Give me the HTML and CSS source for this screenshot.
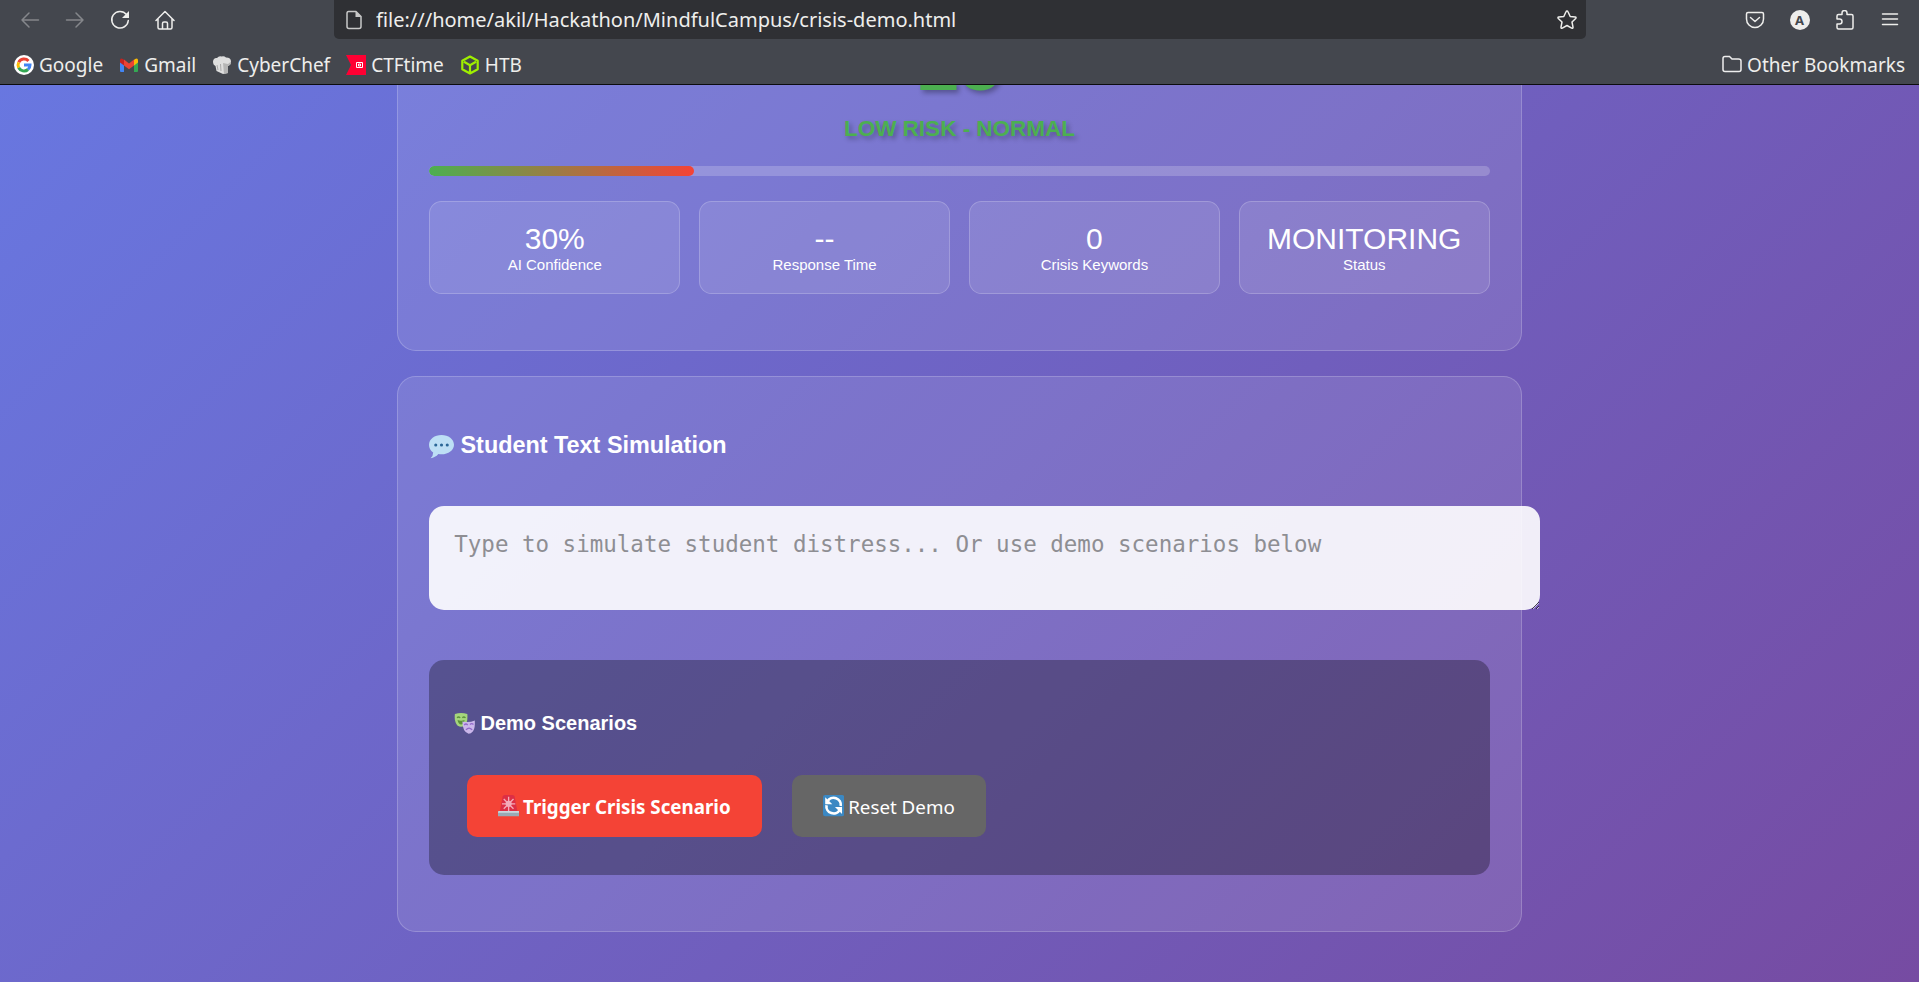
FILE: index.html
```html
<!DOCTYPE html>
<html lang="en">
<head>
<meta charset="utf-8">
<title>MindfulCampus</title>
<link rel="stylesheet" href="styles.css">
</head>
<body>
<header class="chrome">
  <div class="toolbar">
    <nav class="tools" aria-label="Navigation">
      <button class="tool dim" aria-label="Back"><svg class="icon" viewBox="0 0 20 20"><path d="M18.500 10H2M9 3l-7 7 7 7"/></svg></button>
      <button class="tool dim" aria-label="Forward"><svg class="icon" viewBox="0 0 20 20"><path d="M1.500 10H18M11 3l7 7-7 7"/></svg></button>
      <button class="tool" aria-label="Reload"><svg class="icon" viewBox="0 0 20 20"><path d="M16.500 4.500A8.300 8.300 0 1 0 18.300 10.500"/><path class="solid" d="M19 1v7h-7z"/></svg></button>
      <button class="tool" aria-label="Home"><svg class="icon" viewBox="0 0 20 20"><path d="M1 10.500 10 1.500l9 9M3 9v8.500q0 1.500 1.500 1.500h11q1.500 0 1.500-1.500V9M7.500 19v-5.500q0-1.500 1.500-1.500h2q1.500 0 1.500 1.500V19"/></svg></button>
    </nav>
    <div class="address">
      <svg class="icon pale" viewBox="0 0 20 20"><path d="M4.500 1.500h7.500l5 5v10q0 2-2 2H5q-2 0-2-2v-13q0-2 1.500-2z"/><path class="solid" d="M11.500 1v6h6z"/></svg>
      <input class="url" type="text" aria-label="Address" value="file:///home/akil/Hackathon/MindfulCampus/crisis-demo.html">
      <button class="star" aria-label="Bookmark this page"><svg class="icon" viewBox="0 0 20 20"><path d="M10 1q.7 0 1 .7l2.200 4.800 5 .6q1.400.3.500 1.400l-3.700 3.500 1 5.200q.1 1.500-1.300.9L10 15.500l-4.700 2.600q-1.400.6-1.300-.9l1-5.200-3.700-3.500q-.9-1.100.5-1.400l5-.6L9 1.700q.3-.7 1-.7z"/></svg></button>
    </div>
    <nav class="tools" aria-label="Extensions">
      <button class="tool" aria-label="Pocket"><svg class="icon" viewBox="0 0 20 20"><path d="M3 2.500h14q1.500 0 1.500 1.500v5a8.500 8.500 0 0 1-17 0V4q0-1.500 1.500-1.500zM5.500 7.500 10 11.500l4.500-4"/></svg></button>
      <button class="tool" aria-label="Account"><span class="avatar">A</span></button>
      <button class="tool" aria-label="Add-ons"><svg class="icon" viewBox="0 0 20 20"><path d="M2 9V6q0-1.500 1.500-1.500H7V3a2.500 2.500 0 0 1 5 0v1.500h4.500Q18 4.500 18 6v11.500q0 1.500-1.500 1.500h-13Q2 19 2 17.500V14h2.500a2.500 2.500 0 0 0 0-5z"/></svg></button>
      <button class="tool" aria-label="Menu"><svg class="icon" viewBox="0 0 20 20"><path d="M2.500 4h15M2.500 9h15M2.500 14.500h15"/></svg></button>
    </nav>
  </div>
  <nav class="bookmarks" aria-label="Bookmarks">
    <a class="bookmark" href="#"><svg class="favicon" viewBox="0 0 20 20"><circle cx="10" cy="10" r="10" fill="#fff"/><g fill="none" stroke-width="3"><path d="M4.700 7.300A6 6 0 0 1 14.500 6" stroke="#ea4335"/><path d="M4.700 7.300a6 6 0 0 0 0 5.400" stroke="#fbbc05"/><path d="M4.700 12.700A6 6 0 0 0 14 14.500" stroke="#34a853"/><path d="M14 14.500A6 6 0 0 0 16 10h-6" stroke="#4285f4"/></g></svg>Google</a>
    <a class="bookmark" href="#"><svg class="favicon" viewBox="0 0 20 20"><path d="M1 5v11q0 1 1 1h3V8z" fill="#4285f4"/><path d="M19 5v11q0 1-1 1h-3V8z" fill="#34a853"/><path d="M15 5l1-1q3-1.500 3 1.500v2L15 10.500z" fill="#fbbc04"/><path d="M5 5 4 4Q1 2.500 1 5.500v2l4 3z" fill="#c5221f"/><path d="M5 4.500l5 4 5-4v6L10 14.200l-5-3.700z" fill="#ea4335"/></svg>Gmail</a>
    <a class="bookmark" href="#"><svg class="favicon" viewBox="0 0 20 20"><path d="M4.500 16 3.500 11Q1 10 1 6.500 1.500 2.500 5 3q2-2.500 4.500-1.500Q12 .5 14 2.500q5 0 5 4 0 3.500-3 4.500v7l-5 1z" fill="#dedede"/><path d="M11 8l1 11 4-1v-7q3-1 3-4.500L16 9z" fill="#b5b5b5"/><path d="M5 10l1 5M8.500 9l.5 7" stroke="#aaa"/></svg>CyberChef</a>
    <a class="bookmark" href="#"><svg class="favicon" viewBox="0 0 20 20"><path d="M0 0h20v20H0l5-10z" fill="#ff0033"/><path d="M10.500 7.500h6v5h-6zM12.500 9h2v2h-2z" fill="none" stroke="#fff"/></svg>CTFtime</a>
    <a class="bookmark" href="#"><svg class="favicon" viewBox="0 0 20 20"><path d="M10 1.500l7.700 4.300v8.400L10 18.500l-7.700-4.300V5.800zM4 6.800l6 3.400 6-3.400M10 10v8" fill="none" stroke="#9fef00" stroke-width="2.200" stroke-linejoin="round"/></svg>HTB</a>
    <a class="bookmark other" href="#"><svg class="favicon" viewBox="0 0 20 20"><path d="M3 1.500h4.500L10 4h6.500Q19 4 19 6v8.500q0 2-2 2H3q-2 0-2-2v-11q0-2 2-2z" fill="none" stroke="#eee" stroke-width="1.500"/></svg>Other Bookmarks</a>
  </nav>
</header>
<div class="viewport">
  <main class="container">
    <section class="card">
      <div class="score">25</div>
      <div class="level">LOW RISK - NORMAL</div>
      <div class="track"><div class="fill" style="width:25%"></div></div>
      <div class="stats">
        <div class="stat"><div class="value">30%</div><div class="label">AI Confidence</div></div>
        <div class="stat"><div class="value">--</div><div class="label">Response Time</div></div>
        <div class="stat"><div class="value">0</div><div class="label">Crisis Keywords</div></div>
        <div class="stat"><div class="value">MONITORING</div><div class="label">Status</div></div>
      </div>
    </section>
    <section class="card">
      <h3 class="title"><label class="caption" for="message"><svg class="emoji" viewBox="0 0 24 24"><path d="M12 1c6.600 0 12 4 12 9.300s-5.400 9.200-12 9.200q-1.500 0-3-.3-3 3.500-7.500 4 2.500-2 2.500-5.500Q0 15 0 10.300C0 5 5.400 1 12 1z" fill="#bddff5"/><g fill="#2a6797"><circle cx="6.500" cy="10.500" r="1.500"/><circle cx="12" cy="10.500" r="1.500"/><circle cx="17.500" cy="10.500" r="1.500"/></g></svg>Student Text Simulation</label></h3>
      <textarea id="message" class="message" placeholder="Type to simulate student distress... Or use demo scenarios below"></textarea>
      <div class="scenarios">
        <h4 class="subtitle"><svg class="emoji" viewBox="0 0 24 24"><path d="M1 1q7-2 14 0 1 9-3 13-4 3-8 0Q0 10 1 1z" fill="#a5d67c"/><path d="M3.500 5.500Q5 3.500 7 5.500M9.500 5.500q1.500-2 3.500 0" fill="none" stroke="#5c913b" stroke-width="1.500"/><path d="M4 8q4 1.500 8 0-1 5-4 5t-4-5z" fill="#5c913b"/><path d="M9.500 9.500q7 2 14-1 .5 9-2 12-2.500 3-5 3-7-2.500-7-14z" fill="#cbb7ea"/><path d="M11.500 13.500q2-2 4 0M18 13q2-2 4 0M13.500 19q3.500-4 7 0" fill="none" stroke="#9268ca" stroke-width="1.500"/></svg>Demo Scenarios</h4>
        <div class="actions">
          <button class="action danger"><svg class="emoji" viewBox="0 0 24 24"><path d="M5 3q0-3 3-3h8q3 0 3 3l3 16H2z" fill="#dd2e44"/><path d="M12 2v16M4.500 10h15M6.500 4.500l11 11M17.500 4.500l-11 11" stroke="#f4abba" stroke-width="1.500"/><circle cx="12" cy="10" r="3.500" fill="#f4abba"/><path d="M1 18h22q1 0 1 1v5H0v-5q0-1 1-1z" fill="#99aab5"/><path d="M1 18h22q1 0 1 2H0q0-2 1-2z" fill="#ccd6dd"/></svg>Trigger Crisis Scenario</button>
          <button class="action plain"><svg class="emoji" viewBox="0 0 24 24"><rect width="24" height="24" rx="2.500" fill="#3b88c3"/><path d="M5 7.500A8 8 0 0 1 20 12.500M19 16.500A8 8 0 0 1 4 11.500" fill="none" stroke="#fff" stroke-width="3"/><path d="M2.500 2.500v8h8zM21.500 21.500v-8h-8z" fill="#fff"/></svg>Reset Demo</button>
        </div>
      </div>
    </section>
  </main>
</div>
</body>
</html>
```
FILE: styles.css
```css
body {
  margin: 0;
  height: 100vh;
  display: flex;
  flex-direction: column;
  overflow: hidden;
  font-family: "Liberation Sans", Arial, sans-serif;
  color: #fff;
}

button,
input {
  font: inherit;
  color: inherit;
  border: 0;
  background: none;
  padding: 0;
}

/* Browser bars */
.chrome {
  flex: none;
  background: #44474e;
  color: #eeeeec;
  border-bottom: 1px solid #0c0c0d;
  font: 20px/26px "Noto Sans", sans-serif;
}

.toolbar {
  display: flex;
  height: 39px;
  padding: 0 7px;
}

.tools {
  display: flex;
}

.tool {
  width: 45px;
  display: grid;
  place-items: center;
}

.dim {
  color: #85878b;
}

.icon {
  width: 20px;
  height: 20px;
  flex: none;
  fill: none;
  stroke: currentColor;
  stroke-width: 1.5;
  stroke-linecap: round;
  stroke-linejoin: round;
}

.icon .solid {
  fill: currentColor;
  stroke: none;
}

.pale {
  color: #c8c8c8;
}

.address {
  flex: 1;
  display: flex;
  align-items: center;
  gap: 12px;
  margin: 0 146px 0 147px;
  padding: 0 9px 0 10px;
  background: #2f3034;
  border-radius: 0 0 5px 5px;
}

.url {
  flex: 1;
  min-width: 0;
}

.star {
  display: flex;
}

.avatar {
  width: 20px;
  height: 20px;
  border-radius: 50%;
  background: #eeeeec;
  color: #44474e;
  font: bold 13px/20px "Noto Sans", sans-serif;
}

.bookmarks {
  display: flex;
  align-items: center;
  gap: 16px;
  height: 39px;
  padding: 6px 14px 0;
  font-size: 19px;
  white-space: nowrap;
}

.bookmark {
  display: flex;
  align-items: center;
  gap: 5px;
  color: inherit;
  text-decoration: none;
}

.other {
  margin-left: auto;
}

.favicon {
  width: 20px;
  height: 20px;
  flex: none;
}

/* Page, shown scrolled to its end */
.viewport {
  flex: 1;
  min-height: 0;
  overflow: hidden;
  display: flex;
  flex-direction: column;
  justify-content: flex-end;
  background: linear-gradient(135deg, #667eea 0%, #764ba2 100%) bottom / 100% 150%;
}

.container {
  zoom: 1.25;
  width: 100%;
  max-width: 900px;
  margin: 0 auto;
  padding: 20px;
}

.card {
  margin-bottom: 20px;
  padding: 25px;
  background: rgba(255, 255, 255, 0.1);
  border: 1px solid rgba(255, 255, 255, 0.2);
  border-radius: 15px;
}

.score {
  margin-bottom: 7px;
  font-size: 60px;
  font-weight: bold;
  text-align: center;
  color: #4caf50;
  text-shadow: 2px 2px 4px rgba(0, 0, 0, 0.3);
}

.level {
  font-size: 18px;
  line-height: 20px;
  font-weight: bold;
  text-align: center;
  color: #4caf50;
  text-shadow: 2px 2px 4px rgba(0, 0, 0, 0.3);
}

.track {
  height: 8px;
  margin: 20px 0;
  overflow: hidden;
  background: rgba(255, 255, 255, 0.2);
  border-radius: 4px;
}

.fill {
  height: 100%;
  background: linear-gradient(90deg, #4caf50, #f44336);
  border-radius: 4px;
}

.stats {
  display: grid;
  grid-template-columns: repeat(4, 1fr);
  gap: 15px;
  margin: 20px 0;
}

.stat {
  padding: 15px;
  text-align: center;
  background: rgba(255, 255, 255, 0.1);
  border: 1px solid rgba(255, 255, 255, 0.2);
  border-radius: 10px;
}

.value {
  font-size: 24px;
  line-height: 28px;
}

.label {
  font-size: 12px;
  line-height: 15px;
}

.title {
  margin: 19px 0 17px;
  line-height: 22px;
}

.subtitle {
  margin: 21px 0;
  font-size: 16px;
  line-height: 20px;
}

.caption,
.subtitle {
  display: flex;
  align-items: center;
  gap: 5px;
}

.subtitle {
  gap: 4px;
}

.emoji {
  width: 20px;
  height: 20px;
  flex: none;
}

.message {
  display: inline-block;
  vertical-align: top;
  width: 100%;
  height: 43px;
  margin: 20px 0;
  padding: 20px;
  border: 0;
  border-radius: 12px;
  background: rgba(255, 255, 255, 0.9);
  color: #333;
  font: 18px "DejaVu Sans Mono", monospace;
}

.message::placeholder {
  color: #8e8e93;
}

.scenarios {
  margin: 20px 0;
  padding: 20px;
  background: rgba(0, 0, 0, 0.3);
  border-radius: 12px;
}

.subtitle .emoji,
.action .emoji {
  width: 17px;
  height: 17px;
}

.actions {
  display: flex;
  flex-wrap: wrap;
  gap: 24px;
  padding: 10px;
}

.action {
  display: flex;
  align-items: center;
  gap: 3px;
  padding: 15px 25px;
  border-radius: 8px;
  font: 15px/20px "Noto Sans", sans-serif;
}

.danger {
  font-weight: bold;
  background: #f44336;
}

.plain {
  background: #666;
}
```
